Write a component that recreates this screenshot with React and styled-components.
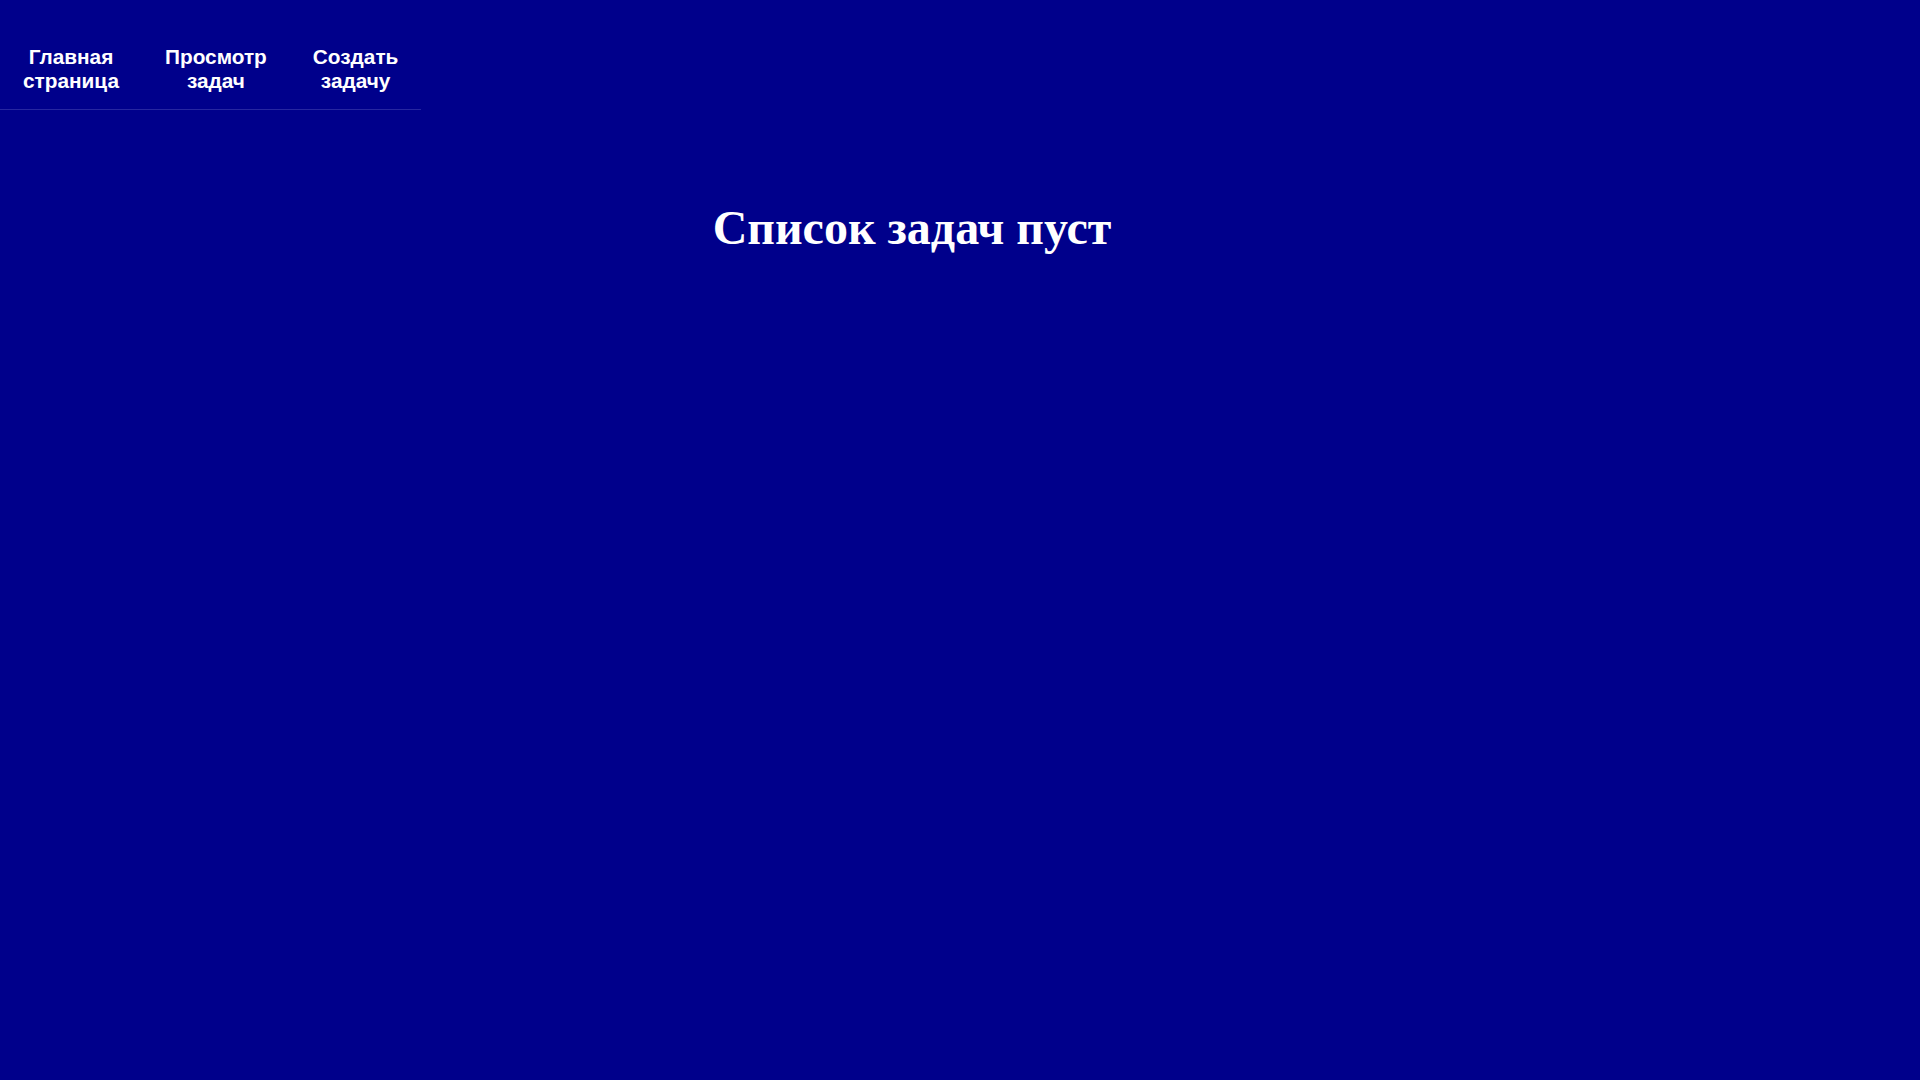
import styled, { createGlobalStyle } from 'styled-components'

const GlobalStyle = createGlobalStyle`
    html, body {
        margin: 0;
        padding: 0;
        background: #00008b;
        color: #ffffff;
        min-height: 100%;
    }
`

const Page = styled.div`
    min-height: 100vh;
    background: #00008b;
    display: flex;
    flex-direction: column;
`

const Nav = styled.nav`
    display: flex;
    width: fit-content;
    border-bottom: 1px solid #2626a0;
`

const NavLink = styled.a`
    width: min-content;
    padding: 45px 23px 16px 23px;
    font-family: "Liberation Sans", Arial, sans-serif;
    font-size: 20.8px;
    font-weight: bold;
    line-height: 24px;
    text-align: center;
    color: #ffffff;
    text-decoration: none;
    cursor: pointer;
`

const Main = styled.main`
    display: flex;
    justify-content: center;
    padding: 90px 96px 0 0;
`

const Title = styled.h1`
    margin: 0;
    font-family: "Liberation Serif", "Times New Roman", serif;
    font-size: 48px;
    font-weight: bold;
    line-height: 55px;
    color: #ffffff;
`

const links = ['Главная страница', 'Просмотр задач', 'Создать задачу']

export default function App() {
    return (
        <Page>
            <GlobalStyle />
            <Nav>
                {links.map(l => <NavLink key={l}>{l}</NavLink>)}
            </Nav>
            <Main>
                <Title>Список задач пуст</Title>
            </Main>
        </Page>
    )
}
